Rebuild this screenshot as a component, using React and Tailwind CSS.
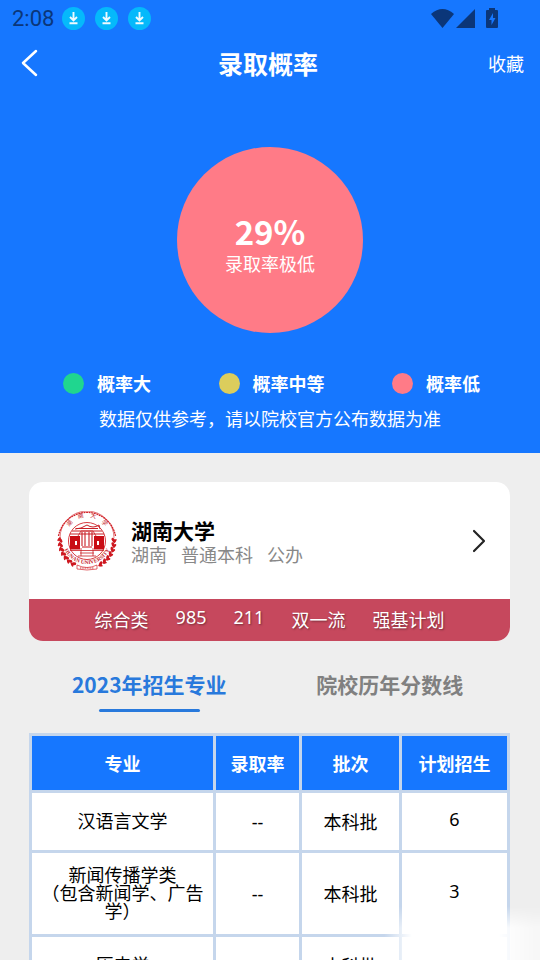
import React from 'react';

const cjk = "font-['Noto_Sans_CJK_SC',sans-serif]";
const latin = "font-['Noto_Sans','Noto_Sans_CJK_SC',sans-serif]";

const legend = [
  { label: '概率大', color: 'bg-[#20d68f]' },
  { label: '概率中等', color: 'bg-[#dccd5c]' },
  { label: '概率低', color: 'bg-[#ff7b87]' },
];

const tags = ['综合类', '985', '211', '双一流', '强基计划'];

const majors = [
  { name: ['汉语言文学'], rate: '--', batch: '本科批', plan: '6' },
  { name: ['新闻传播学类', '（包含新闻学、广告学）'], rate: '--', batch: '本科批', plan: '3' },
  { name: ['历史学'], rate: '--', batch: '本科批', plan: '' },
];

const DownloadBadge = () => (
  <svg viewBox="0 0 23 23" className="w-[23px] h-[23px]" aria-hidden="true">
    <circle cx="11.5" cy="11.5" r="11.5" fill="#05b9fb" />
    <path d="M11.5 5v8M8 10l3.5 3.5L15 10M7.5 16.3h8" fill="none" stroke="#effaff" strokeWidth="1.9" />
  </svg>
);

const StatusBar = () => (
  <div className="flex items-center justify-between h-[37px] pl-3 pr-[41px] text-[#0b3679]">
    <div className="flex items-center gap-[10px]">
      <span className="w-[40px] text-[22px] leading-[24px] whitespace-nowrap font-['Roboto',sans-serif]">2:08</span>
      <DownloadBadge />
      <DownloadBadge />
      <DownloadBadge />
    </div>
    <svg viewBox="0 0 68 21" className="w-[68px] h-[21px]" fill="currentColor" aria-hidden="true">
      <path d="M0 6Q11.5-4 23 6L11.5 20Z" />
      <path d="M44 1v19H25z" />
      <path d="M58 0h6v2h2q1 0 1 1v16q0 1-1 1H56q-1 0-1-1V3q0-1 1-1h2z" />
      <path d="M62 5l-4 7h2.500v5l4-7H62z" fill="#1677ff" />
    </svg>
  </div>
);

const laurel = Array.from({ length: 19 }, (_, i) => -2 + i * 10.2).filter((a) => a < 68 || a > 112);

const SchoolEmblem = () => (
  <svg viewBox="0 0 60 60" className="w-[60px] h-[60px] shrink-0" role="img" aria-label="湖南大学">
    <defs>
      <path id="emblem-top" d="M9 27A21 21 0 0 1 51 27" />
      <path id="emblem-bottom" d="M6 35A25 25 0 0 0 54 35" />
    </defs>
    <g fill="none" stroke="#d2262c">
      <path d="M1.500 25A29 29 0 0 1 58.500 25" strokeWidth="1.300" strokeDasharray="2 .6" />
      <path d="M3 27A27 27 0 0 1 57 27" strokeWidth=".6" />
      <circle cx="30" cy="30" r="18.500" strokeWidth=".9" />
      <path d="M20 54q10 5 20 0v4q-10 2-20 0z" strokeWidth=".7" />
      <path d="M23 57h14" strokeWidth="1" strokeDasharray="1 .7" />
    </g>
    {laurel.map((a) => (
      <g key={a} transform={`rotate(${a} 30 30)`} fill="#ce1820">
        <ellipse cx="56.5" cy="30" rx="1.5" ry="2.7" transform="rotate(-35 56.5 30)" />
        <ellipse cx="58" cy="31" rx="1" ry="2.3" transform="rotate(35 58 31)" />
      </g>
    ))}
    <g fill="none" stroke="#c91e25">
      <path d="M18 18q6 0 12-4 6 4 12 0l1 4M15 20h30M19 17.500h22M13 23h34" strokeWidth="1" />
      <path d="M21 25l3-5h12l3 5" strokeWidth=".8" />
      <path d="M25 21v14M28 21v14M32 21v14M35 21v14" strokeWidth="1.100" />
      <path d="M13 39.500h34M23 42h14M21 45h18M24 37v8M36 37v8" strokeWidth=".8" />
    </g>
    <path d="M13 25h10v13.500H13zM37 25h10v13.500H37z" fill="#c90d15" />
    <path d="M18 30h2v4h-2zM40 30h2v4h-2z" fill="#fff" />
    <path d="M25 36h10" stroke="#c90d15" strokeWidth="1.200" />
    <g fill="#c4242a" className="font-['Noto_Sans_CJK_SC',serif]">
      <text fontSize="6" textAnchor="middle">
        <textPath href="#emblem-top" startOffset="50%">湖　南　大　学</textPath>
      </text>
      <text fontSize="5.500" fontWeight="700" textAnchor="middle" className="font-['Liberation_Serif',serif]">
        <textPath href="#emblem-bottom" startOffset="50%">HUNAN UNIVERSITY</textPath>
      </text>
    </g>
  </svg>
);

const App = () => (
  <div className={`relative flex flex-col h-screen overflow-hidden bg-[#eeeeee] text-black ${cjk}`}>
    <header className="shrink-0 bg-[#1677ff] text-white">
      <StatusBar />
      <nav className="grid grid-cols-[1fr_auto_1fr] items-center h-[52px] pl-3 pr-4">
        <button type="button" aria-label="返回" className="justify-self-start pl-2">
          <svg viewBox="0 0 18 28" className="w-[18px] h-[28px]" fill="none" stroke="currentColor" strokeWidth="2.5" strokeLinecap="round" strokeLinejoin="round">
            <path d="M16 2L3 14l13 12" />
          </svg>
        </button>
        <h1 className="text-[25px] leading-[36px] font-bold">录取概率</h1>
        <button type="button" className="justify-self-end text-[18px] leading-[26px]">收藏</button>
      </nav>

      <div className="flex flex-col items-center justify-center w-[186px] h-[186px] mx-auto mt-[58px] pt-2 rounded-full bg-[#ff7b87]">
        <strong className="text-[33px] leading-[38px] font-bold">29%</strong>
        <span className="text-[18px] leading-[26px]">录取率极低</span>
      </div>

      <ul className="flex justify-between pl-[63px] pr-[60px] pt-[37px]">
        {legend.map((item) => (
          <li key={item.label} className="flex items-center gap-[13px]">
            <span className={`w-[21px] h-[21px] rounded-full ${item.color}`}></span>
            <span className="text-[18px] leading-[26px] font-bold">{item.label}</span>
          </li>
        ))}
      </ul>
      <p className="pt-[9px] pb-[22px] text-center text-[18px] leading-[26px]">
        数据仅供参考，请以院校官方公布数据为准
      </p>
    </header>

    <main className="flex-1 min-h-0 overflow-hidden pl-[29px] pr-[30px] pt-[29px]">
      <section className="rounded-[14px] overflow-hidden bg-white">
        <a href="#school" className="flex items-center h-[117px] pl-[28px] pr-[22px]">
          <SchoolEmblem />
          <div className="flex-1 pl-[14px] pt-[3px]">
            <h2 className="text-[21px] leading-[24px] font-bold">湖南大学</h2>
            <p className="flex gap-[14px] text-[18px] leading-[24px] text-[#888888]">
              <span>湖南</span>
              <span>普通本科</span>
              <span>公办</span>
            </p>
          </div>
          <svg viewBox="0 0 18 26" className="w-[18px] h-[26px]" fill="none" stroke="#242424" strokeWidth="2.2" strokeLinecap="round" strokeLinejoin="round" aria-hidden="true">
            <path d="M4 3l10 10L4 23" />
          </svg>
        </a>
        <div className="flex items-start justify-center gap-[27px] h-[42px] pt-[6px] bg-[#c6485d] text-white text-[18px] [text-shadow:1px_1px_2px_rgba(0,0,0,0.4)]">
          {tags.map((tag) => (
            <span key={tag} className={/^\d+$/.test(tag) ? `leading-[24px] ${latin}` : 'leading-[28px]'}>{tag}</span>
          ))}
        </div>
      </section>

      <div role="tablist" className="grid grid-cols-2 h-[92px] pt-[28px] text-[21px] leading-[30px] font-bold">
        <button type="button" role="tab" aria-selected="true" className="flex flex-col items-center gap-[10px] text-[#2879dc]">
          2023年招生专业
          <span className="w-[101px] h-[3px] rounded-full bg-[#2879dc]"></span>
        </button>
        <button type="button" role="tab" aria-selected="false" className="flex flex-col items-center text-[#808080]">
          院校历年分数线
        </button>
      </div>

      <table className="w-full table-fixed border-separate border-spacing-[3px] bg-[#c5d6ec] text-center text-[18px] leading-[18px]">
        <thead className="text-white">
          <tr className="h-[54px]">
            <th className="bg-[#1677ff] w-[181px]">专业</th>
            <th className="bg-[#1677ff] w-[83px]">录取率</th>
            <th className="bg-[#1677ff] w-[97px]">批次</th>
            <th className="bg-[#1677ff]">计划招生</th>
          </tr>
        </thead>
        <tbody>
          {majors.map((m) => (
            <tr key={m.name[0]} className="h-[57px]">
              <td className="bg-white px-[6px] pt-3 pb-[15px]">
                {m.name.map((line) => (
                  <div key={line}>{line}</div>
                ))}
              </td>
              <td className={`bg-white ${latin}`}>{m.rate}</td>
              <td className="bg-white pb-[2px]">{m.batch}</td>
              <td className={`bg-white pb-[6px] ${latin}`}>{m.plan}</td>
            </tr>
          ))}
        </tbody>
      </table>
    </main>

    {/* light fade over the lower corner */}
    <div className="absolute right-0 bottom-0 w-[156px] h-[54px] pointer-events-none bg-white [mask-image:linear-gradient(to_right,transparent,black_28px,black_114px,rgba(0,0,0,0.55)_150px),linear-gradient(to_bottom,transparent,black_22px)] [mask-composite:intersect]"></div>
  </div>
);

export default App;
